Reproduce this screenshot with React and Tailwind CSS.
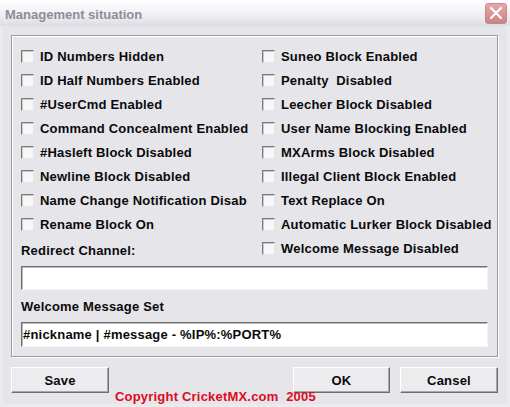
import React from "react";

const leftOptions = [
  "ID Numbers Hidden",
  "ID Half Numbers Enabled",
  "#UserCmd Enabled",
  "Command Concealment Enabled",
  "#Hasleft Block Disabled",
  "Newline Block Disabled",
  "Name Change Notification Disab",
  "Rename Block On",
];

const rightOptions = [
  "Suneo Block Enabled",
  "Penalty  Disabled",
  "Leecher Block Disabled",
  "User Name Blocking Enabled",
  "MXArms Block Disabled",
  "Illegal Client Block Enabled",
  "Text Replace On",
  "Automatic Lurker Block Disabled",
  "Welcome Message Disabled",
];

function CheckOption({ label }) {
  return (
    <label className="flex items-center h-[24px] whitespace-pre overflow-hidden">
      <span className="w-[13px] h-[13px] shrink-0 bg-[#f7f7f7] border border-t-[#7a7a7a] border-l-[#7a7a7a] border-b-[#e8e8e8] border-r-[#e8e8e8] shadow-[inset_1px_1px_0_#c8c8c8]" />
      <span className="ml-[6px]">{label}</span>
    </label>
  );
}

function WinButton({ children, className = "" }) {
  return (
    <button
      type="button"
      className={`h-[26px] bg-[#ececee] border border-t-white border-l-white border-b-[#6e6e6e] border-r-[#6e6e6e] shadow-[inset_-1px_-1px_0_#a8a8ac] ${className}`}
    >
      {children}
    </button>
  );
}

function Field({ value }) {
  return (
    <div className="h-full bg-white border border-t-[#707070] border-l-[#707070] border-b-[#f4f4f4] border-r-[#f4f4f4] shadow-[inset_1px_1px_0_#b8b8b8] flex items-center px-[1px] whitespace-pre">
      {value}
    </div>
  );
}

export default function App() {
  return (
    <div
      className="w-[510px] h-[407px] bg-[#e5e5ea] flex flex-col text-[13px] leading-[15px] font-bold text-[#0a0a0a] tracking-[0.2px] overflow-hidden"
      style={{ fontFamily: '"Liberation Sans", Arial, sans-serif' }}
    >
      {/* title bar */}
      <div className="h-[26px] shrink-0 flex items-center justify-between pl-[5px] pr-[3px] bg-gradient-to-b from-[#ffffff] via-[#f2f2f6] to-[#dcdce4]">
        <span className="text-[13px] text-[#8e8e96] tracking-[0px] pt-[2px]">Management situation</span>
        <div className="w-[22px] h-[21px] rounded-[3px] bg-gradient-to-b from-[#e6a8a8] to-[#cc8484] border border-[#c48888] flex items-center justify-center">
          <svg width="14" height="14" viewBox="0 0 14 14">
            <path d="M2 2 L12 12 M12 2 L2 12" stroke="#ffffff" strokeWidth="2.2" strokeLinecap="round" />
          </svg>
        </div>
      </div>

      {/* body */}
      <div className="flex-1 flex flex-col pl-[11px] pr-[12px] pt-[9px] border-x-[3px] border-b-[3px] border-[#ebebef]">
        <div className="-ml-[3px] -mr-[3px] border border-[#9a9aa2] shadow-[1px_1px_0_#ffffff,inset_1px_1px_0_#ffffff] pt-[8px] pb-[9px] pl-[9px] pr-[9px] flex flex-col">
          <div className="grid grid-cols-[241px_1fr]">
            <div className="flex flex-col">
              {leftOptions.map((o) => (
                <CheckOption key={o} label={o} />
              ))}
              <div className="h-[24px] flex items-center pt-[4px]">Redirect Channel:</div>
            </div>
            <div className="flex flex-col">
              {rightOptions.map((o) => (
                <CheckOption key={o} label={o} />
              ))}
            </div>
          </div>
          <div className="mt-[6px] h-[24px]">
            <Field value="" />
          </div>
          <div className="mt-[4px] h-[24px] flex items-center">Welcome Message Set</div>
          <div className="mt-[4px] h-[25px]">
            <Field value="#nickname | #message - %IP%:%PORT%" />
          </div>
        </div>

        {/* buttons */}
        <div className="relative mt-[10px] -ml-[3px] -mr-[3px] flex items-center">
          <WinButton className="w-[98px]">Save</WinButton>
          <div className="flex-1" />
          <WinButton className="w-[97px]">OK</WinButton>
          <WinButton className="w-[98px] ml-[10px]">Cansel</WinButton>
          <span className="absolute left-[104px] top-[22px] text-[#dc0c22] whitespace-pre tracking-[0.2px]">
            Copyright CricketMX.com  2005
          </span>
        </div>
      </div>
    </div>
  );
}
